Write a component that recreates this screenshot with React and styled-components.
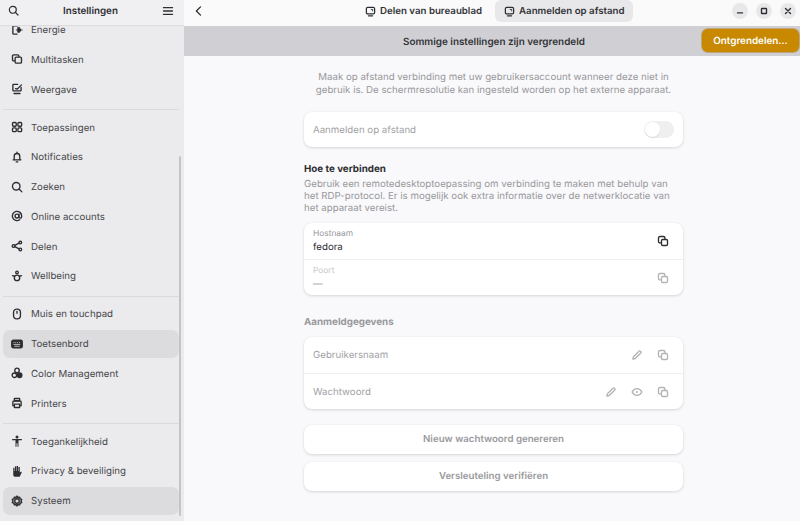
import React from "react";
import styled, { createGlobalStyle } from "styled-components";

const GlobalStyle = createGlobalStyle`
  html, body { margin: 0; padding: 0; background: #f9f9fb; }
  body {
    font-family: Inter, "Noto Sans", sans-serif;
    font-size: 9.7px;
    color: #303034;
    text-rendering: geometricPrecision;
  }
`;

const Window = styled.div`
  width: 800px;
  height: 521px;
  display: flex;
  overflow: hidden;
`;

const Sidebar = styled.aside`
  position: relative;
  width: 184px;
  flex: none;
  display: flex;
  flex-direction: column;
  background: #ebebed;
  overflow: hidden;
`;

const SideHeader = styled.header`
  height: 26px;
  flex: none;
  display: flex;
  align-items: center;
  justify-content: space-between;
  padding: 0 10px 4px 8px;
  background: #f0f0f2;
  border-bottom: 1px solid #dcdcdf;
  box-sizing: border-box;
  font-size: 9.8px;
  font-weight: 600;
  color: #2e2e32;
  position: relative;
  z-index: 1;
`;

const HeaderTitle = styled.span`
  padding-top: 2px;
`;

const SideList = styled.nav`
  display: flex;
  flex-direction: column;
  margin-top: -10.5px;
  padding: 0 5px 0 3px;
`;

const Row = styled.div`
  height: 28px;
  margin-bottom: 1.75px;
  flex: none;
  display: flex;
  align-items: center;
  gap: 8px;
  padding-left: 8px;
  border-radius: 7px;
  color: #47474b;
  background: ${(p) => (p.$active ? "#dcdcde" : "transparent")};
  svg { flex: none; }
`;

const RowText = styled.span`
  padding-top: 2px;
`;

const Separator = styled.hr`
  border: 0;
  height: 1px;
  margin: 4.25px 0 3px 0;
  background: #dadadc;
  flex: none;
`;

const ScrollThumb = styled.div`
  position: absolute;
  right: 3px;
  top: 156px;
  width: 2px;
  height: 360px;
  border-radius: 1px;
  background: #c4c4c6;
`;

const Main = styled.main`
  flex: 1;
  min-width: 0;
  display: flex;
  flex-direction: column;
  background: #f9f9fb;
`;

const TopBar = styled.header`
  height: 26px;
  flex: none;
  box-sizing: border-box;
  display: flex;
  align-items: center;
  padding: 0 0 4px 9px;
  background: #fafafb;
`;

const Tabs = styled.div`
  display: flex;
  align-items: center;
  margin-left: 151px;
  gap: 5px;
`;

const Tab = styled.div`
  height: 22px;
  display: flex;
  align-items: center;
  gap: 4px;
  padding: 0 8px 0 9px;
  border-radius: 6px;
  font-weight: 600;
  color: #333337;
  background: ${(p) => (p.$active ? "#e8e8ea" : "transparent")};
`;

const WindowButtons = styled.div`
  display: flex;
  gap: 8px;
  margin-left: auto;
  margin-right: 4px;
`;

const WindowButton = styled.div`
  width: 16px;
  height: 16px;
  border-radius: 50%;
  background: #e8e8ea;
  display: flex;
  align-items: center;
  justify-content: center;
`;

const Banner = styled.div`
  height: 30px;
  flex: none;
  display: flex;
  align-items: center;
  justify-content: space-between;
  background: #d0d0d4;
  font-size: 9.9px;
  font-weight: 600;
  color: #333337;
  padding-left: 219px;
`;

const BannerText = styled.span`
  padding-top: 2px;
`;

const UnlockButton = styled.div`
  width: 97px;
  height: 23px;
  box-sizing: border-box;
  margin: 0 1px 1px 0;
  display: flex;
  align-items: center;
  justify-content: center;
  border-radius: 6px;
  background: #c88800;
  color: #fff;
  font-size: 9.85px;
  font-weight: 600;
  box-shadow: 0 0 0 1px #bfa57a;
`;

const Content = styled.div`
  width: 379px;
  margin-left: 120px;
  display: flex;
  flex-direction: column;
`;

const Intro = styled.p`
  margin: 15px 0;
  text-align: center;
  line-height: 13px;
  color: #98989c;
`;

const Card = styled.section`
  display: flex;
  flex-direction: column;
  background: #fff;
  border-radius: 8px;
  box-shadow: 0 1px 3px rgba(0, 0, 0, 0.14), 0 0 1px rgba(0, 0, 0, 0.06);
`;

const CardRow = styled.div`
  height: ${(p) => p.$h || 36}px;
  box-sizing: border-box;
  display: flex;
  align-items: center;
  padding: 0 14px 0 9px;
  color: #a2a2a5;
  & + & { border-top: 1px solid #efeff0; }
`;

const FieldText = styled.div`
  flex: 1;
  display: flex;
  flex-direction: column;
  gap: 1px;
  padding-top: 1px;
`;

const FieldLabel = styled.span`
  font-size: 8.4px;
  line-height: 11px;
  color: ${(p) => (p.$dim ? "#c6c6c8" : "#97979a")};
`;

const FieldValue = styled.span`
  line-height: 13px;
  color: ${(p) => (p.$dim ? "#b5b5b7" : "#2e2e32")};
`;

const RowLabel = styled.span`
  flex: 1;
  padding-top: 1px;
`;

const Icons = styled.div`
  display: flex;
  align-items: center;
  gap: 14px;
`;

const Toggle = styled.div`
  position: relative;
  width: 30px;
  height: 17px;
  margin-right: -5px;
  border-radius: 9px;
  background: #efeff0;
`;

const Knob = styled.div`
  position: absolute;
  left: 1px;
  top: 1px;
  width: 15px;
  height: 15px;
  border-radius: 50%;
  background: #fff;
  box-shadow: 0 1px 1px rgba(0, 0, 0, 0.1);
`;

const SectionTitle = styled.h3`
  margin: ${(p) => (p.$dim ? "20.5px 0 8.5px" : "16px 0 3px")};
  font-size: 9.8px;
  line-height: 13px;
  font-weight: 700;
  color: ${(p) => (p.$dim ? "#98989c" : "#2e2e32")};
`;

const SectionHelp = styled.p`
  margin: 0 0 8px;
  line-height: 12px;
  color: #98989c;
`;

const WideButton = styled.div`
  height: 29px;
  display: flex;
  align-items: center;
  justify-content: center;
  background: #fff;
  border-radius: 8px;
  font-weight: 600;
  color: #9a9a9d;
  margin-top: ${(p) => p.$mt || 8}px;
  box-shadow: 0 1px 3px rgba(0, 0, 0, 0.14), 0 0 1px rgba(0, 0, 0, 0.06);
`;

// 16 grid icons, stroke or fill comes from the shape
const Ico = ({ size = 12, color = "#2e2e32", children }) => (
  <svg
    width={size}
    height={size}
    viewBox="0 0 16 16"
    fill="none"
    stroke={color}
    strokeWidth="1.8"
    strokeLinecap="round"
    strokeLinejoin="round"
  >
    {children}
  </svg>
);

const CopyIcon = ({ color }) => (
  <Ico size={12} color={color}>
    <path d="M5 10.5H3.8A1.8 1.8 0 0 1 2 8.7V3.8A1.8 1.8 0 0 1 3.8 2h4.9a1.8 1.8 0 0 1 1.8 1.8V5" />
    <rect x="6" y="6" width="8" height="8" rx="1.6" />
  </Ico>
);

const EditIcon = () => (
  <Ico size={12} color="#b3b3b5">
    <path d="M2.5 13.5l.8-3.2 7.4-7.4a1.2 1.2 0 0 1 1.7 0l.7.7a1.2 1.2 0 0 1 0 1.7l-7.4 7.4z" />
  </Ico>
);

const EyeIcon = () => (
  <Ico size={12} color="#b3b3b5">
    <path d="M1.5 8C3 5 5.2 3.5 8 3.5S13 5 14.5 8c-1.5 3-3.7 4.5-6.5 4.5S3 11 1.5 8z" />
    <circle cx="8" cy="8" r="1.4" fill="#b3b3b5" stroke="none" />
  </Ico>
);

const SearchIcon = ({ size }) => (
  <Ico size={size}>
    <circle cx="7" cy="7" r="5" />
    <path d="M10.8 10.8L14.5 14.5" />
  </Ico>
);

const ScreenIcon = () => (
  <Ico size={11}>
    <rect x="2" y="2" width="12" height="9.5" rx="2" />
    <path d="M5 14.2h6" />
    <path d="M9 5h2.2v2.2" strokeWidth="1.3" />
  </Ico>
);

const sideIcons = {
  energy: (
    <Ico>
      <path d="M8 2.5H3.5a1 1 0 0 0-1 1v9a1 1 0 0 0 1 1H8" />
      <path d="M7 8h8M9 5v6h2.5l1.5-3-1.5-3z" fill="#2e2e32" strokeWidth="1.2" />
    </Ico>
  ),
  multi: (
    <Ico>
      <path d="M4.5 10.5H3.5a1.5 1.5 0 0 1-1.5-1.5V4a1.5 1.5 0 0 1 1.5-1.5H9A1.5 1.5 0 0 1 10.5 4v1" />
      <rect x="5.5" y="5.5" width="8.5" height="8" rx="1.6" />
    </Ico>
  ),
  display: (
    <Ico>
      <path d="M13.5 6v3.5a1 1 0 0 1-1 1h-9a1 1 0 0 1-1-1V2.8a1 1 0 0 1 1-1H9" />
      <path d="M4 14h8" />
      <path d="M6 7.5l2.5.5L14 2.5" strokeWidth="1.7" />
    </Ico>
  ),
  apps: (
    <Ico>
      <rect x="2" y="2" width="5" height="5" rx="1.3" />
      <rect x="9.2" y="2" width="5" height="5" rx="1.3" />
      <rect x="2" y="9.2" width="5" height="5" rx="1.3" />
      <rect x="9.2" y="9.2" width="5" height="5" rx="1.3" />
    </Ico>
  ),
  bell: (
    <Ico>
      <path d="M2.8 11.8h10.4M4.3 11.5V7a3.7 3.7 0 0 1 7.4 0v4.5" />
      <path d="M8 1.4v1" />
      <path d="M7 14.5h2" />
    </Ico>
  ),
  search: <SearchIcon />,
  at: (
    <Ico>
      <circle cx="8" cy="8" r="2.6" />
      <path d="M10.6 5.5V9a1.8 1.8 0 0 0 3.6 0V8a6.2 6.2 0 1 0-2.6 5" />
    </Ico>
  ),
  share: (
    <Ico>
      <circle cx="3.4" cy="8" r="1.8" />
      <circle cx="12.4" cy="3.4" r="1.8" />
      <circle cx="12.4" cy="12.6" r="1.8" />
      <path d="M5 7.2l5.8-3M5 8.8l5.8 3" />
    </Ico>
  ),
  wellbeing: (
    <Ico>
      <circle cx="8" cy="3.2" r="1.7" />
      <circle cx="8" cy="10.5" r="3.6" />
      <path d="M2 7.5l2.8 1M14 7.5l-2.8 1" />
    </Ico>
  ),
  mouse: (
    <Ico>
      <rect x="3.4" y="1.5" width="9.2" height="13" rx="4.4" />
      <path d="M8 4.5v2.5" />
    </Ico>
  ),
  keyboard: (
    <Ico>
      <rect x="1" y="3" width="14" height="10" rx="2" fill="#2e2e32" />
      <path d="M3.8 6h.1M6.3 6h.1M8.8 6h.1M11.3 6h.1M3.8 8.5h8M5 11h6" stroke="#dcdcde" strokeWidth="1.1" />
    </Ico>
  ),
  color: (
    <Ico>
      <circle cx="8" cy="4.5" r="3" />
      <circle cx="4.5" cy="11" r="3" />
      <circle cx="11.5" cy="11" r="3" fill="#2e2e32" />
    </Ico>
  ),
  printer: (
    <Ico>
      <path d="M4.5 2h7v3h-7z" />
      <path d="M4 11.5H2.5V6.5a1 1 0 0 1 1-1h9a1 1 0 0 1 1 1v5H12" />
      <path d="M4.5 9.5h7v4.5h-7z" />
    </Ico>
  ),
  access: (
    <svg width="12" height="12" viewBox="0 0 16 16" fill="#2e2e32">
      <circle cx="8" cy="2.5" r="2" />
      <path d="M1.5 5.2h13v1.8H10v8.5H8.7V11H7.3v4.5H6V7H1.5z" />
    </svg>
  ),
  hand: (
    <svg width="12" height="12" viewBox="0 0 16 16" fill="#2e2e32">
      <path d="M3 3.5h1.7V8h.6V1.8H7V8h.6V1.2h1.8V8h.6V2.6h1.7V10l2-1.2.7.8-2.8 5.9H5c-1.4 0-2-1-2-2.5z" />
    </svg>
  ),
  gear: (
    <Ico>
      <circle cx="8" cy="8" r="3" />
      <path d="M8 1.5l1.3 1.8 2.2-.4.5 2.2 2.2.7-.8 2.2.8 2.2-2.2.7-.5 2.2-2.2-.4L8 14.5l-1.3-1.8-2.2.4-.5-2.2-2.2-.7.8-2.2-.8-2.2 2.2-.7.5-2.2 2.2.4z" strokeWidth="2" />
    </Ico>
  ),
};

const groups = [
  [
    ["energy", "Energie"],
    ["multi", "Multitasken"],
    ["display", "Weergave"],
  ],
  [
    ["apps", "Toepassingen"],
    ["bell", "Notificaties"],
    ["search", "Zoeken"],
    ["at", "Online accounts"],
    ["share", "Delen"],
    ["wellbeing", "Wellbeing"],
  ],
  [
    ["mouse", "Muis en touchpad"],
    ["keyboard", "Toetsenbord", true],
    ["color", "Color Management"],
    ["printer", "Printers"],
  ],
  [
    ["access", "Toegankelijkheid"],
    ["hand", "Privacy & beveiliging"],
    ["gear", "Systeem", true],
  ],
];

export default function App() {
  return (
    <Window>
      <GlobalStyle />
      <Sidebar>
        <SideHeader>
          <SearchIcon size={11} />
          <HeaderTitle>Instellingen</HeaderTitle>
          <Ico size={12}>
            <path d="M2 3.5h12M2 8h12M2 12.5h12" />
          </Ico>
        </SideHeader>
        <SideList>
          {groups.map((group, i) => (
            <React.Fragment key={i}>
              {i > 0 && <Separator />}
              {group.map(([icon, label, active]) => (
                <Row key={label} $active={active}>
                  {sideIcons[icon]}
                  <RowText>{label}</RowText>
                </Row>
              ))}
            </React.Fragment>
          ))}
        </SideList>
        <ScrollThumb />
      </Sidebar>
      <Main>
        <TopBar>
          <Ico size={12}>
            <path d="M10 2.5L4.5 8l5.5 5.5" />
          </Ico>
          <Tabs>
            <Tab>
              <ScreenIcon />
              Delen van bureaublad
            </Tab>
            <Tab $active>
              <ScreenIcon />
              Aanmelden op afstand
            </Tab>
          </Tabs>
          <WindowButtons>
            <WindowButton>
              <Ico size={10}>
                <path d="M4 11h8" strokeWidth="2.2" />
              </Ico>
            </WindowButton>
            <WindowButton>
              <Ico size={10}>
                <rect x="4" y="4" width="8" height="8" rx="0.8" strokeWidth="2.2" />
              </Ico>
            </WindowButton>
            <WindowButton>
              <Ico size={10}>
                <path d="M4 4l8 8M12 4l-8 8" strokeWidth="2.2" />
              </Ico>
            </WindowButton>
          </WindowButtons>
        </TopBar>
        <Banner>
          <BannerText>Sommige instellingen zijn vergrendeld</BannerText>
          <UnlockButton>Ontgrendelen…</UnlockButton>
        </Banner>
        <Content>
          <Intro>
            Maak op afstand verbinding met uw gebruikersaccount wanneer deze niet in
            <br />
            gebruik is. De schermresolutie kan ingesteld worden op het externe apparaat.
          </Intro>
          <Card>
            <CardRow $h={35}>
              <RowLabel>Aanmelden op afstand</RowLabel>
              <Toggle>
                <Knob />
              </Toggle>
            </CardRow>
          </Card>
          <SectionTitle>Hoe te verbinden</SectionTitle>
          <SectionHelp>
            Gebruik een remotedesktoptoepassing om verbinding te maken met behulp van
            het RDP-protocol. Er is mogelijk ook extra informatie over de netwerklocatie van
            het apparaat vereist.
          </SectionHelp>
          <Card>
            <CardRow>
              <FieldText>
                <FieldLabel>Hostnaam</FieldLabel>
                <FieldValue>fedora</FieldValue>
              </FieldText>
              <CopyIcon />
            </CardRow>
            <CardRow>
              <FieldText>
                <FieldLabel $dim>Poort</FieldLabel>
                <FieldValue $dim>—</FieldValue>
              </FieldText>
              <CopyIcon color="#b3b3b5" />
            </CardRow>
          </Card>
          <SectionTitle $dim>Aanmeldgegevens</SectionTitle>
          <Card>
            <CardRow>
              <RowLabel>Gebruikersnaam</RowLabel>
              <Icons>
                <EditIcon />
                <CopyIcon color="#b3b3b5" />
              </Icons>
            </CardRow>
            <CardRow>
              <RowLabel>Wachtwoord</RowLabel>
              <Icons>
                <EditIcon />
                <EyeIcon />
                <CopyIcon color="#b3b3b5" />
              </Icons>
            </CardRow>
          </Card>
          <WideButton $mt={16}>Nieuw wachtwoord genereren</WideButton>
          <WideButton>Versleuteling verifiëren</WideButton>
        </Content>
      </Main>
    </Window>
  );
}
